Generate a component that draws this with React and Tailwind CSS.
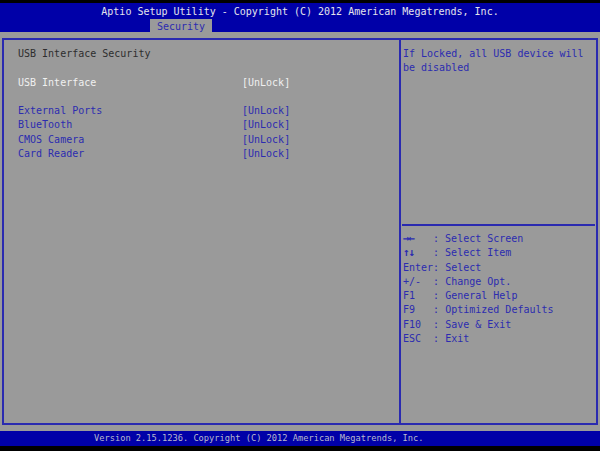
const items = [
  { label: 'External Ports', value: '[UnLock]' },
  { label: 'BlueTooth', value: '[UnLock]' },
  { label: 'CMOS Camera', value: '[UnLock]' },
  { label: 'Card Reader', value: '[UnLock]' },
];

const keys = [
  ['→←', '   ', ': Select Screen'],
  ['↑↓', '   ', ': Select Item'],
  ['', 'Enter', ': Select'],
  ['', '+/-  ', ': Change Opt.'],
  ['', 'F1   ', ': General Help'],
  ['', 'F9   ', ': Optimized Defaults'],
  ['', 'F10  ', ': Save & Exit'],
  ['', 'ESC  ', ': Exit'],
];

export default function App() {
  return (
    <div className="w-[600px] h-[451px] bg-black flex flex-col overflow-hidden font-['DejaVu_Sans_Mono',monospace] text-[10px] leading-[14.3px] whitespace-pre">
      <div className="h-[3px] shrink-0" />

      {/* header with title and tab */}
      <div className="h-[29px] shrink-0 bg-[#0000a8] flex flex-col">
        <div className="pt-[2px] text-center text-[#e4e4ec]">
          Aptio Setup Utility - Copyright (C) 2012 American Megatrends, Inc.
        </div>
        <div className="mt-auto ml-[150px] w-[62px] h-[15px] bg-[#9a9a9a] text-[#2c2cb0] text-center leading-[15px]">
          Security
        </div>
      </div>

      {/* body */}
      <div className="flex-1 bg-[#9a9a9a] px-[2px] pt-[6px] pb-[6px] flex">
        <div className="flex-1 flex border-2 border-[#2a2ab0]">
          <div className="w-[397px] border-r-2 border-[#2a2ab0] pl-[14px] pt-[7px]">
            <div className="text-[#2e2e2e]">USB Interface Security</div>
            <div className="h-[14.3px]" />
            <div className="grid grid-cols-[224px_auto] text-[#f0f0f0]">
              <span>USB Interface</span>
              <span>[UnLock]</span>
            </div>
            <div className="h-[14.3px]" />
            {items.map((it) => (
              <div key={it.label} className="grid grid-cols-[224px_auto] text-[#2c2cb0]">
                <span>{it.label}</span>
                <span>{it.value}</span>
              </div>
            ))}
          </div>

          <div className="flex-1 flex flex-col text-[#2c2cb0]">
            <div className="h-[184px] pl-[2px] pt-[7px]">
              <div>If Locked, all USB device will</div>
              <div>be disabled</div>
            </div>
            <div className="mx-[1px] h-[2px] bg-[#2a2ab0]" />
            <div className="pl-[2px] pt-[6px]">
              {keys.map(([arrow, k, d]) => (
                <div key={k + d}>
                  {arrow && (
                    <span className="inline-block w-[12px] font-bold tracking-[-1px] text-[11px]">{arrow}</span>
                  )}
                  {k}{d}
                </div>
              ))}
            </div>
          </div>
        </div>
      </div>

      {/* footer */}
      <div className="h-[15px] shrink-0 bg-[#0000a8] pl-[94px] text-[8.7px] leading-[15px] text-[#b8b8cc]">
        Version 2.15.1236. Copyright (C) 2012 American Megatrends, Inc.
      </div>
      <div className="h-[5px] shrink-0" />
    </div>
  );
}
